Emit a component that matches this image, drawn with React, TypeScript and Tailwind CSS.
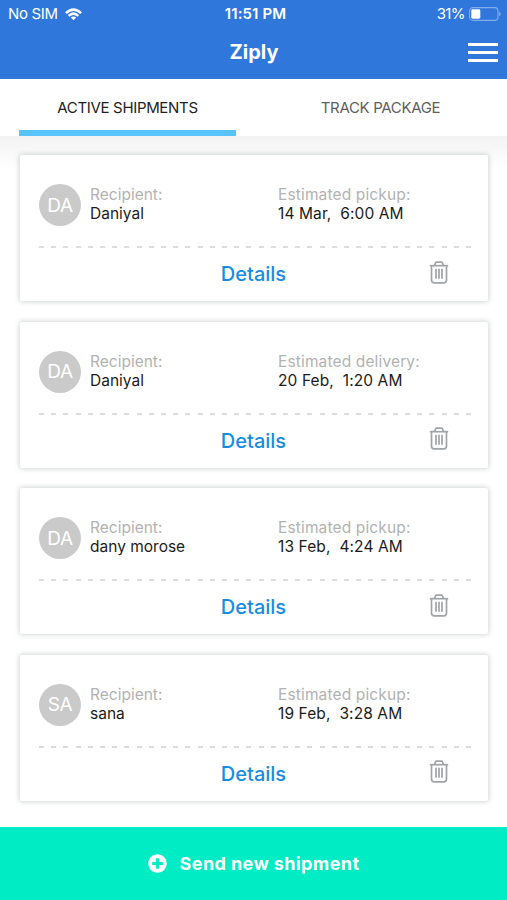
import { FaPlusCircle } from 'react-icons/fa';

type Shipment = {
  initials: string;
  recipient: string;
  label: string;
  date: string;
  time: string;
};

const shipments: Shipment[] = [
  { initials: 'DA', recipient: 'Daniyal', label: 'Estimated pickup:', date: '14 Mar,', time: '6:00 AM' },
  { initials: 'DA', recipient: 'Daniyal', label: 'Estimated delivery:', date: '20 Feb,', time: '1:20 AM' },
  { initials: 'DA', recipient: 'dany morose', label: 'Estimated pickup:', date: '13 Feb,', time: '4:24 AM' },
  { initials: 'SA', recipient: 'sana', label: 'Estimated pickup:', date: '19 Feb,', time: '3:28 AM' },
];

const WifiIcon = () => (
  <svg width="17" height="13" viewBox="0 0 18 13" fill="none" stroke="currentColor" strokeWidth="2.6">
    <path d="M1 5 Q9 -2.4 17 5" />
    <path d="M3.9 7.9 Q9 3.3 14.1 7.9" />
    <path d="M9 12.6 L6.2 9.8 Q9 7.5 11.8 9.8 Z" fill="currentColor" stroke="none" />
  </svg>
);

const BatteryIcon = () => (
  <svg width="32" height="14" viewBox="0 0 32 14" fill="none">
    <rect x="0.6" y="0.6" width="28.4" height="12.8" rx="3.4" stroke="#fff" strokeOpacity="0.4" strokeWidth="1.1" />
    <rect x="2.3" y="2.3" width="9" height="9.4" rx="1.4" fill="#fff" />
    <path d="M30.2 4.8 Q31.8 5.4 31.8 7 Q31.8 8.6 30.2 9.2 Z" fill="#fff" fillOpacity="0.4" />
  </svg>
);

const TrashIcon = () => (
  <svg width="20" height="23" viewBox="0 0 20 23" fill="none" stroke="#a0a4a6" strokeWidth="1.7">
    <path d="M0.8 4.7 H19.2" />
    <path d="M5.6 4.4 L6.5 2 Q6.8 1.2 7.7 1.2 H12.3 Q13.2 1.2 13.5 2 L14.4 4.4" />
    <path d="M2.5 5 V19 Q2.5 21.8 5.3 21.8 H14.7 Q17.5 21.8 17.5 19 V5" />
    <path d="M7 7.8 V17.8 M10 7.8 V17.8 M13 7.8 V17.8" />
  </svg>
);

const StatusBar = () => (
  <div className="grid h-7 grid-cols-3 items-center pl-2 pr-1.5 text-[15px] leading-7">
    <div className="flex items-center gap-[7px]">
      <span className="tracking-[-0.35px]">No SIM</span>
      <WifiIcon />
    </div>
    <span className="pl-0.5 text-center text-[15px] font-semibold tracking-[0.1px]">11:51 PM</span>
    <div className="flex items-center justify-end gap-1">
      <span className="tracking-[-0.6px]">31%</span>
      <BatteryIcon />
    </div>
  </div>
);

const Header = () => (
  <header className="h-[79px] bg-[#3077dc] text-white">
    <StatusBar />
    <div className="grid grid-cols-[1fr_auto_1fr] items-center pl-px pr-[9px] pt-2">
      <h1 className="col-start-2 pl-[9px] text-xl font-bold leading-8">Ziply</h1>
      <button className="flex flex-col gap-[5px] justify-self-end" aria-label="Menu">
        <span className="h-[3px] w-[30px] bg-white" />
        <span className="h-[3px] w-[30px] bg-white" />
        <span className="h-[3px] w-[30px] bg-white" />
      </button>
    </div>
  </header>
);

const Tabs = () => (
  <nav className="grid h-[57px] grid-cols-[217px_217px] justify-between bg-white pl-[19px] pr-[18px] text-[15px]">
    <button className="border-b-[6px] border-[#58c4fb] pt-2 tracking-[-0.33px] text-[#222]">ACTIVE SHIPMENTS</button>
    <button className="border-b-[6px] border-transparent pt-2 tracking-[-0.33px] text-[#606060]">TRACK PACKAGE</button>
  </nav>
);

const ShipmentCard = ({ initials, recipient, label, date, time }: Shipment) => (
  <article className="h-[146px] rounded-[2px] bg-white px-[19px] shadow-[0_0_5px_1px_rgba(120,130,130,0.32)]">
    <div className="flex h-[91px] items-center pt-2 text-[15.5px] leading-[19px]">
      <div className="mt-px flex size-[42px] items-center justify-center rounded-full bg-[#cacaca] text-[19px] tracking-[-0.3px] text-white">
        {initials}
      </div>
      <div className="mb-px ml-[9px] w-[188px]">
        <p className="text-[#b2b2b2]">Recipient:</p>
        <p className="text-[#1b1b1b]">{recipient}</p>
      </div>
      <div className="mb-px">
        <p className="tracking-[0.14px] text-[#b2b2b2]">{label}</p>
        <p className="whitespace-pre tracking-[0.1px] text-[#1b1b1b]">{`${date}  ${time}`}</p>
      </div>
    </div>
    <div className="-mr-1 h-0.5 bg-[repeating-linear-gradient(90deg,#dcdcdc_0_5px,transparent_5px_12.2px)]" />
    <div className="grid grid-cols-[1fr_auto_1fr] items-center pt-2.5">
      <button className="col-start-2 -ml-px text-xl leading-8 font-medium text-[#168de0]">Details</button>
      <button className="mr-5 mb-1 justify-self-end" aria-label="Delete shipment">
        <TrashIcon />
      </button>
    </div>
  </article>
);

const App = () => (
  <div className="flex h-[900px] w-[507px] flex-col overflow-hidden bg-white font-['Inter',sans-serif]">
    <Header />
    <Tabs />
    <main className="flex flex-1 flex-col gap-[20.6px] bg-[linear-gradient(#f3f3f3,#fff_34px)] pl-5 pr-[19px] pt-[19px]">
      {shipments.map((shipment) => (
        <ShipmentCard key={shipment.date} {...shipment} />
      ))}
    </main>
    <button className="flex h-[73px] items-center justify-center gap-[13px] bg-[#00ecc4] text-lg font-bold tracking-[0.4px] text-white">
      <FaPlusCircle size={19} />
      Send new shipment
    </button>
  </div>
);

export default App;
